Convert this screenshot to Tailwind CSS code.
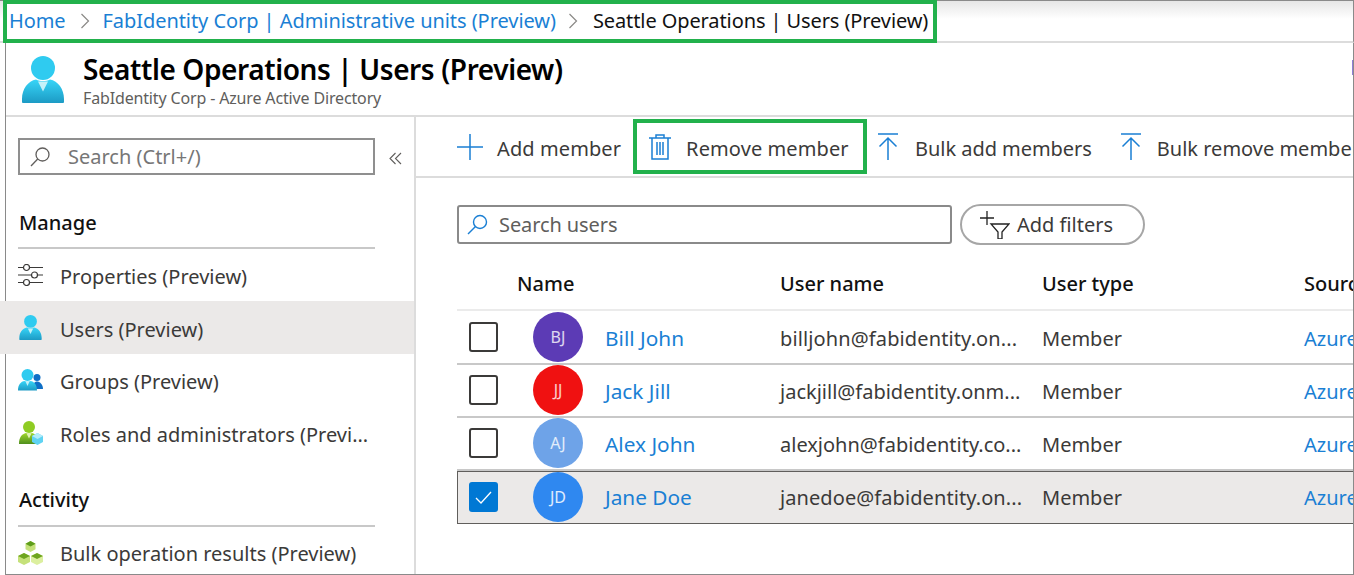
<!DOCTYPE html>
<html lang="en">
  <head>
    <meta charset="UTF-8" />
    <title>Seattle Operations | Users (Preview)</title>
    <script src="https://cdn.jsdelivr.net/npm/@tailwindcss/browser@4"></script>
  </head>
  <body class="bg-white overflow-hidden font-['Noto_Sans',sans-serif] text-[20px] text-[#3b3a39]">
    <svg class="absolute w-0 h-0" width="0" height="0">
      <defs>
        <linearGradient id="blueUser" x1="0" y1="0" x2="0" y2="1">
          <stop offset="0" stop-color="#37d5f8" />
          <stop offset="1" stop-color="#1c9ac4" />
        </linearGradient>
        <linearGradient id="greenUser" x1="0" y1="0" x2="0" y2="1">
          <stop offset="0" stop-color="#9fd62b" />
          <stop offset="1" stop-color="#4f8f1e" />
        </linearGradient>
        <symbol id="person" viewBox="0 0 42 47">
          <circle cx="21" cy="12" r="12" fill="#2fcbf0" />
          <path d="M1 47c-1.500 0-1-2-1-4 0-10 6-18 14-19.500 4 2 10 2 14 0 8 1.500 14 9.500 14 19.500 0 2 .5 4-1 4z" fill="url(#blueUser)" />
          <path d="M16 25.500h10l-5 10z" fill="#c5f1f8" />
        </symbol>
      </defs>
    </svg>

    <div class="h-[575px] w-[1354px] flex flex-col overflow-hidden">
      <!-- Breadcrumb -->
      <div class="h-[43px] shrink-0 flex border-t border-t-[#8a8a8a] border-b-2 border-b-[#dcdcdc] bg-gradient-to-b from-[#e6e6e6] via-white via-[45%] to-white border-r border-r-[#8a8a8a]">
        <nav class="ml-[3px] w-[934px] h-[43px] -mt-px pb-[2px] shrink-0 border-4 border-[#22b14c] bg-white flex items-center whitespace-nowrap text-[20px] tracking-[-0.1px]">
          <a class="ml-[2px] text-[#1a7fd4]">Home</a>
          <svg class="ml-[14px]" width="10" height="16" viewBox="0 0 10 16" fill="none" stroke="#8a8886" stroke-width="1.200"><path d="M1.500 1l7 7-7 7" /></svg>
          <a class="ml-[13px] text-[#1a7fd4] tracking-[-0.06px]">FabIdentity Corp | Administrative units (Preview)</a>
          <svg class="ml-[12px]" width="10" height="16" viewBox="0 0 10 16" fill="none" stroke="#8a8886" stroke-width="1.200"><path d="M1.500 1l7 7-7 7" /></svg>
          <span class="ml-[15px] text-[#111]">Seattle Operations | Users (Preview)</span>
        </nav>
      </div>

      <div class="ml-[5px] flex-1 min-h-0 flex flex-col border-l border-r border-b border-[#8a8a8a]">
        <!-- Page title -->
        <header class="h-[74px] shrink-0 flex border-b-2 border-[#dcdcdc] relative">
          <svg class="ml-[16px] mt-[13px] w-[42px] h-[47px]"><use href="#person" /></svg>
          <div class="ml-[19px] mt-[6px]">
            <h1 class="text-[28px] leading-[40px] font-semibold text-black whitespace-nowrap tracking-[-0.4px]">Seattle Operations | Users (Preview)</h1>
            <p class="text-[16px] leading-[16px] mt-[1px] text-[#605e5c] whitespace-nowrap tracking-[-0.15px]">FabIdentity Corp - Azure Active Directory</p>
          </div>
          <div class="absolute right-0 top-[17px] w-[1px] h-[15px] bg-[#8f7fd6]"></div>
        </header>

        <div class="flex-1 min-h-0 flex">
          <!-- Left menu -->
          <aside class="w-[410px] shrink-0 border-r-2 border-[#dcdcdc]">
            <div class="flex items-center mt-[21px] ml-[12px]">
              <div class="w-[357px] h-[37px] border-[2px] border-[#8f8f8f] flex items-center">
                <svg class="ml-[9px]" width="22" height="22" viewBox="0 0 22 22" fill="none" stroke="#605e5c" stroke-width="1.300"><circle cx="13.500" cy="8.500" r="6.500" /><path d="M8.700 13L2 20" /></svg>
                <span class="ml-[17px] text-[#767676]">Search (Ctrl+/)</span>
              </div>
              <svg class="ml-[14px] mt-[3px]" width="13" height="13" viewBox="0 0 13 13" fill="none" stroke="#605e5c" stroke-width="1.100"><path d="M6.500 1L1 6.500 6.500 12M12 1L6.500 6.500 12 12" /></svg>
            </div>

            <h2 class="ml-[12px] pl-px mt-[31px] h-[43px] w-[357px] border-b-2 border-[#c8c8c8] text-[20px] leading-[34px] font-medium text-[#111]">Manage</h2>
            <ul>
              <li class="h-[52px] flex items-center pl-[12px]">
                <svg width="25" height="22" viewBox="0 0 25 22" fill="none" stroke="#3b3a39" stroke-width="1.200"><path d="M0 3.500h5M12 3.500h13M0 11h13M20 11h5M0 18.500h5M12 18.500h13" /><circle cx="8.500" cy="3.500" r="3" /><circle cx="16.500" cy="11" r="3" /><circle cx="8.500" cy="18.500" r="3" /></svg>
                <span class="ml-[17px] pt-1">Properties (Preview)</span>
              </li>
              <li class="h-[53px] flex items-center pl-[19px] -ml-[6px] bg-[#ebe9e8]">
                <svg class="w-[23px] h-[25px]"><use href="#person" /></svg>
                <span class="ml-[18px] pt-1">Users (Preview)</span>
              </li>
              <li class="h-[53px] flex items-center pl-[12px]">
                <svg width="25" height="23" viewBox="0 0 25 23"><circle cx="19" cy="8.500" r="3.500" fill="#0f6fc6" /><path d="M14.500 20c0-5 2-7.500 4.500-7.500s6 2.500 6 7.500z" fill="#0f6fc6" /><circle cx="9.500" cy="6" r="6" fill="#2fcbf0" /><path d="M0 21.500c0-6 3-9 6.500-9.500 2 1 4 1 6 0 3.500.5 6.500 3.500 6.500 9.500z" fill="url(#blueUser)" /><path d="M7.500 12.500h4l-2 4.500z" fill="#c5f1f8" /></svg>
                <span class="ml-[17px] pt-[2px]">Groups (Preview)</span>
              </li>
              <li class="h-[52px] flex items-center pl-[12px]">
                <svg width="25" height="24" viewBox="0 0 25 24"><circle cx="11" cy="6" r="6" fill="#8fcc23" /><path d="M1 23c0-7 3-10 7-11 2 1 4 1 6 0 4 1 7 4 7 11z" fill="url(#greenUser)" /><path d="M8.500 12.500h5l-2.500 5z" fill="#dff2b8" /><path d="M19.500 12l5.500 3v6l-5.500 3-5.500-3v-6z" fill="#5fd3f3" /><path d="M19.500 12l5.500 3-5.500 3-5.500-3z" fill="#b4ecfa" /></svg>
                <span class="ml-[17px] pt-1 whitespace-nowrap">Roles and administrators (Previ...</span>
              </li>
            </ul>

            <h2 class="ml-[12px] pl-px mt-[26px] h-[42px] w-[357px] border-b-2 border-[#c8c8c8] text-[20px] leading-[30px] font-medium text-[#111]">Activity</h2>
            <div class="h-[52px] flex items-center pl-[12px]">
              <svg width="25" height="24" viewBox="0 0 25 24"><path d="M12.500 0l5 2.800v5.400l-5 2.800-5-2.800V2.800z" fill="#c5e17a" /><path d="M12.500 0l5 2.800-5 2.800-5-2.800z" fill="#5e9d1a" /><path d="M6 12l6 3v6l-6 3-6-3v-6z" fill="#c5e17a" /><path d="M6 12l6 3-6 3-6-3z" fill="#6ea51f" /><path d="M19 12l6 3v6l-6 3-6-3v-6z" fill="#dcef9f" /><path d="M19 12l6 3-6 3-6-3z" fill="#6ea51f" /></svg>
              <span class="ml-[17px] pt-[2px] whitespace-nowrap">Bulk operation results (Preview)</span>
            </div>
          </aside>

          <!-- Main -->
          <main class="flex-1 min-w-0 overflow-hidden">
            <div class="h-[61px] border-b-2 border-[#dcdcdc] flex items-center whitespace-nowrap">
              <svg class="ml-[41px] shrink-0" width="26" height="26" viewBox="0 0 26 26" stroke="#1a7fd4" stroke-width="1.500"><path d="M13 0v26M0 13h26" /></svg>
              <span class="ml-[14px] pt-1 shrink-0 tracking-[0.1px]">Add member</span>
              <div class="ml-[12px] w-[234px] h-[55px] shrink-0 border-4 border-[#22b14c] flex items-center">
                <svg class="ml-[12px] shrink-0" width="22" height="26" viewBox="0 0 22 26" fill="none" stroke="#1a7fd4" stroke-width="1.500"><path d="M0 4h22M7 4V1h8v3M3 4v21h16V4M8 8v13M11 8v13M14 8v13" /></svg>
                <span class="ml-[15px] pt-1 tracking-[0.1px]">Remove member</span>
              </div>
              <svg class="ml-[11px] shrink-0" width="20" height="27" viewBox="0 0 20 27" fill="none" stroke="#1a7fd4" stroke-width="1.500"><path d="M0 1h20M10 27V5M1.500 13.500L10 5l8.500 8.500" /></svg>
              <span class="ml-[17px] pt-1 shrink-0 tracking-[-0.05px]">Bulk add members</span>
              <svg class="ml-[29px] shrink-0" width="20" height="27" viewBox="0 0 20 27" fill="none" stroke="#1a7fd4" stroke-width="1.500"><path d="M0 1h20M10 27V5M1.500 13.500L10 5l8.500 8.500" /></svg>
              <span class="ml-[16px] pt-1 shrink-0">Bulk remove members</span>
            </div>

            <div class="ml-[41px]">
              <div class="flex items-center mt-[26px] gap-[8px]">
                <div class="w-[495px] h-[39px] border-2 border-[#8a8a8a] rounded-[3px] flex items-center">
                  <svg class="ml-[8px]" width="21" height="21" viewBox="0 0 21 21" fill="none" stroke="#1a7fd4" stroke-width="1.400"><circle cx="13" cy="8" r="6.500" /><path d="M8.500 12.500L1 20" /></svg>
                  <span class="ml-[11px] text-[#605e5c] tracking-[-0.1px]">Search users</span>
                </div>
                <div class="w-[185px] h-[41px] border-2 border-[#a6a6a6] rounded-full flex items-center">
                  <svg class="ml-[18px]" width="30" height="28" viewBox="0 0 30 28" fill="none" stroke="#222" stroke-width="1.300"><path d="M7 0v14M0 7h14M11 13h18l-7 8v7h-4v-7z" /></svg>
                  <span class="ml-[7px]">Add filters</span>
                </div>
              </div>

              <!-- Users table -->
              <div class="mt-[19px] w-[1000px] whitespace-nowrap">
                <div class="h-[47px] pb-[5px] grid grid-cols-[60px_263px_262px_262px_1fr] items-center border-b-2 border-[#ebebeb] font-medium text-[#111]">
                  <span class="col-start-2">Name</span>
                  <span>User name</span>
                  <span>User type</span>
                  <span>Source</span>
                </div>
                <div class="h-[54px] grid grid-cols-[60px_263px_262px_262px_1fr] items-center border-b-2 border-[#c8c8c8]">
                  <span class="ml-[12px] w-[29px] h-[30px] border-2 border-[#3b3a39] rounded-[3px]"></span>
                  <div class="flex items-center">
                    <span class="ml-[16px] w-[50px] h-[50px] rounded-full bg-[#5c3bb5] text-white/80 text-[16px] flex items-center justify-center">BJ</span>
                    <a class="ml-[22px] pt-1 text-[20.800px] text-[#1a7fd4]">Bill John</a>
                  </div>
                  <span class="pt-1 tracking-[0.12px]">billjohn@fabidentity.on...</span>
                  <span class="pt-1">Member</span>
                  <a class="pt-1 text-[#1a7fd4]">Azure Active Directory</a>
                </div>
                <div class="h-[53px] pb-[2px] grid grid-cols-[60px_263px_262px_262px_1fr] items-center border-b-2 border-[#c8c8c8]">
                  <span class="ml-[12px] w-[29px] h-[30px] border-2 border-[#3b3a39] rounded-[3px]"></span>
                  <div class="flex items-center">
                    <span class="ml-[16px] w-[50px] h-[50px] rounded-full bg-[#f01111] text-white/80 text-[16px] flex items-center justify-center">JJ</span>
                    <a class="ml-[22px] pt-1 text-[20.800px] text-[#1a7fd4]">Jack Jill</a>
                  </div>
                  <span class="pt-1">jackjill@fabidentity.onm...</span>
                  <span class="pt-1">Member</span>
                  <a class="pt-1 text-[#1a7fd4]">Azure Active Directory</a>
                </div>
                <div class="h-[53px] pb-[2px] grid grid-cols-[60px_263px_262px_262px_1fr] items-center border-b-2 border-[#c8c8c8]">
                  <span class="ml-[12px] w-[29px] h-[30px] border-2 border-[#3b3a39] rounded-[3px]"></span>
                  <div class="flex items-center">
                    <span class="ml-[16px] w-[50px] h-[50px] rounded-full bg-[#6ea3e8] text-white/80 text-[16px] flex items-center justify-center">AJ</span>
                    <a class="ml-[22px] pt-1 text-[20.800px] text-[#1a7fd4]">Alex John</a>
                  </div>
                  <span class="pt-1">alexjohn@fabidentity.co...</span>
                  <span class="pt-1">Member</span>
                  <a class="pt-1 text-[#1a7fd4]">Azure Active Directory</a>
                </div>
                <div class="h-[53px] pb-[2px] grid grid-cols-[59px_263px_262px_262px_1fr] items-center border border-[#605e5c] bg-[#ebe9e8]">
                  <span class="ml-[11px] w-[29px] h-[30px] bg-[#0078d4] rounded-[3px] flex items-center justify-center">
                    <svg width="17" height="13" viewBox="0 0 17 13" fill="none" stroke="#fff" stroke-width="1.300"><path d="M1 7l5 5L16 1" /></svg>
                  </span>
                  <div class="flex items-center">
                    <span class="ml-[16px] w-[50px] h-[50px] rounded-full bg-[#2f88f0] text-white/85 text-[16px] flex items-center justify-center">JD</span>
                    <a class="ml-[22px] pt-[2px] text-[20.800px] text-[#1a7fd4]">Jane Doe</a>
                  </div>
                  <span class="pt-[2px] tracking-[0.08px]">janedoe@fabidentity.on...</span>
                  <span class="pt-[2px]">Member</span>
                  <a class="pt-[2px] text-[#1a7fd4]">Azure Active Directory</a>
                </div>
              </div>
            </div>
          </main>
        </div>
      </div>
    </div>
  </body>
</html>
